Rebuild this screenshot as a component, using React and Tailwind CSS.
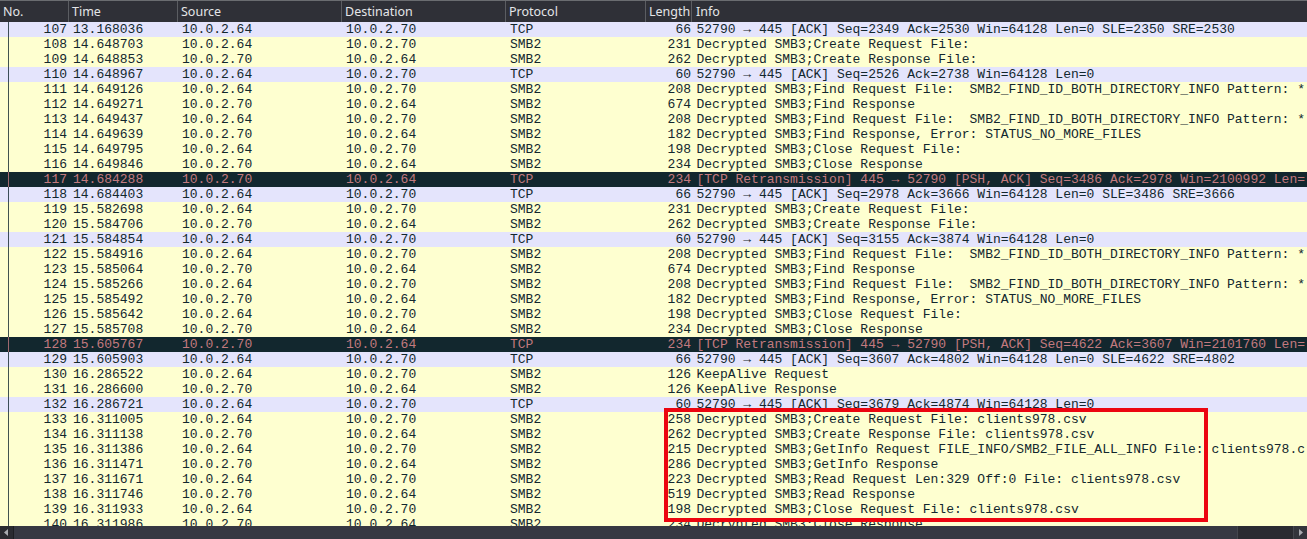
const packets = [
  [107, '13.168036', '10.0.2.64', '10.0.2.70', 'TCP', 66, '52790 → 445 [ACK] Seq=2349 Ack=2530 Win=64128 Len=0 SLE=2350 SRE=2530'],
  [108, '14.648703', '10.0.2.64', '10.0.2.70', 'SMB2', 231, 'Decrypted SMB3;Create Request File:'],
  [109, '14.648853', '10.0.2.70', '10.0.2.64', 'SMB2', 262, 'Decrypted SMB3;Create Response File:'],
  [110, '14.648967', '10.0.2.64', '10.0.2.70', 'TCP', 60, '52790 → 445 [ACK] Seq=2526 Ack=2738 Win=64128 Len=0'],
  [111, '14.649126', '10.0.2.64', '10.0.2.70', 'SMB2', 208, 'Decrypted SMB3;Find Request File:  SMB2_FIND_ID_BOTH_DIRECTORY_INFO Pattern: *'],
  [112, '14.649271', '10.0.2.70', '10.0.2.64', 'SMB2', 674, 'Decrypted SMB3;Find Response'],
  [113, '14.649437', '10.0.2.64', '10.0.2.70', 'SMB2', 208, 'Decrypted SMB3;Find Request File:  SMB2_FIND_ID_BOTH_DIRECTORY_INFO Pattern: *'],
  [114, '14.649639', '10.0.2.70', '10.0.2.64', 'SMB2', 182, 'Decrypted SMB3;Find Response, Error: STATUS_NO_MORE_FILES'],
  [115, '14.649795', '10.0.2.64', '10.0.2.70', 'SMB2', 198, 'Decrypted SMB3;Close Request File:'],
  [116, '14.649846', '10.0.2.70', '10.0.2.64', 'SMB2', 234, 'Decrypted SMB3;Close Response'],
  [117, '14.684288', '10.0.2.70', '10.0.2.64', 'TCP', 234, '[TCP Retransmission] 445 → 52790 [PSH, ACK] Seq=3486 Ack=2978 Win=2100992 Len='],
  [118, '14.684403', '10.0.2.64', '10.0.2.70', 'TCP', 66, '52790 → 445 [ACK] Seq=2978 Ack=3666 Win=64128 Len=0 SLE=3486 SRE=3666'],
  [119, '15.582698', '10.0.2.64', '10.0.2.70', 'SMB2', 231, 'Decrypted SMB3;Create Request File:'],
  [120, '15.584706', '10.0.2.70', '10.0.2.64', 'SMB2', 262, 'Decrypted SMB3;Create Response File:'],
  [121, '15.584854', '10.0.2.64', '10.0.2.70', 'TCP', 60, '52790 → 445 [ACK] Seq=3155 Ack=3874 Win=64128 Len=0'],
  [122, '15.584916', '10.0.2.64', '10.0.2.70', 'SMB2', 208, 'Decrypted SMB3;Find Request File:  SMB2_FIND_ID_BOTH_DIRECTORY_INFO Pattern: *'],
  [123, '15.585064', '10.0.2.70', '10.0.2.64', 'SMB2', 674, 'Decrypted SMB3;Find Response'],
  [124, '15.585266', '10.0.2.64', '10.0.2.70', 'SMB2', 208, 'Decrypted SMB3;Find Request File:  SMB2_FIND_ID_BOTH_DIRECTORY_INFO Pattern: *'],
  [125, '15.585492', '10.0.2.70', '10.0.2.64', 'SMB2', 182, 'Decrypted SMB3;Find Response, Error: STATUS_NO_MORE_FILES'],
  [126, '15.585642', '10.0.2.64', '10.0.2.70', 'SMB2', 198, 'Decrypted SMB3;Close Request File:'],
  [127, '15.585708', '10.0.2.70', '10.0.2.64', 'SMB2', 234, 'Decrypted SMB3;Close Response'],
  [128, '15.605767', '10.0.2.70', '10.0.2.64', 'TCP', 234, '[TCP Retransmission] 445 → 52790 [PSH, ACK] Seq=4622 Ack=3607 Win=2101760 Len='],
  [129, '15.605903', '10.0.2.64', '10.0.2.70', 'TCP', 66, '52790 → 445 [ACK] Seq=3607 Ack=4802 Win=64128 Len=0 SLE=4622 SRE=4802'],
  [130, '16.286522', '10.0.2.64', '10.0.2.70', 'SMB2', 126, 'KeepAlive Request'],
  [131, '16.286600', '10.0.2.70', '10.0.2.64', 'SMB2', 126, 'KeepAlive Response'],
  [132, '16.286721', '10.0.2.64', '10.0.2.70', 'TCP', 60, '52790 → 445 [ACK] Seq=3679 Ack=4874 Win=64128 Len=0'],
  [133, '16.311005', '10.0.2.64', '10.0.2.70', 'SMB2', 258, 'Decrypted SMB3;Create Request File: clients978.csv'],
  [134, '16.311138', '10.0.2.70', '10.0.2.64', 'SMB2', 262, 'Decrypted SMB3;Create Response File: clients978.csv'],
  [135, '16.311386', '10.0.2.64', '10.0.2.70', 'SMB2', 215, 'Decrypted SMB3;GetInfo Request FILE_INFO/SMB2_FILE_ALL_INFO File: clients978.c'],
  [136, '16.311471', '10.0.2.70', '10.0.2.64', 'SMB2', 286, 'Decrypted SMB3;GetInfo Response'],
  [137, '16.311671', '10.0.2.64', '10.0.2.70', 'SMB2', 223, 'Decrypted SMB3;Read Request Len:329 Off:0 File: clients978.csv'],
  [138, '16.311746', '10.0.2.70', '10.0.2.64', 'SMB2', 519, 'Decrypted SMB3;Read Response'],
  [139, '16.311933', '10.0.2.64', '10.0.2.70', 'SMB2', 198, 'Decrypted SMB3;Close Request File: clients978.csv'],
  [140, '16.311986', '10.0.2.70', '10.0.2.64', 'SMB2', 234, 'Decrypted SMB3;Close Response'],
];

const HeaderCell = ({ className, children }) => (
  <div className={`shrink-0 h-full flex items-center pl-[3px] pt-[1px] border-r border-[#5b5d62] ${className}`}>{children}</div>
);

const rowColor = (p) => {
  if (p[6].startsWith('[TCP Retransmission]')) return 'bg-[#12272e] text-[#c27a7f]';
  if (p[4] === 'TCP') return 'bg-[#e4e4fc] text-[#12272e]';
  return 'bg-[#feffd0] text-[#12272e]';
};

const Row = ({ p }) => (
  <div className={`relative flex h-[15px] shrink-0 leading-[15px] whitespace-pre ${rowColor(p)}`}>
    <div className="absolute left-[8px] top-0 h-full w-px bg-current opacity-80" />
    <div className="w-[67px] shrink-0 text-right">{p[0]}</div>
    <div className="w-[109px] shrink-0 pl-[6px]">{p[1]}</div>
    <div className="w-[164px] shrink-0 pl-[6px]">{p[2]}</div>
    <div className="w-[164px] shrink-0 pl-[6px]">{p[3]}</div>
    <div className="w-[140px] shrink-0 pl-[6px]">{p[4]}</div>
    <div className="w-[47px] shrink-0 text-right">{p[5]}</div>
    <div className="pl-[5.5px]">{p[6]}</div>
  </div>
);

const App = () => {
  return (
    <div className="relative flex h-[539px] w-[1307px] flex-col overflow-hidden bg-[#feffd0]">
      <div className="flex h-[22px] shrink-0 border-t border-[#6a6c70] bg-[#2f3037] text-[12.5px] text-[#e4e5e7] font-['Noto_Sans',sans-serif]">
        <HeaderCell className="w-[69px]">No.</HeaderCell>
        <HeaderCell className="w-[109px]">Time</HeaderCell>
        <HeaderCell className="w-[164px]">Source</HeaderCell>
        <HeaderCell className="w-[164px]">Destination</HeaderCell>
        <HeaderCell className="w-[140px]">Protocol</HeaderCell>
        <HeaderCell className="w-[46px]">Length</HeaderCell>
        <div className="flex h-full flex-1 items-center pl-[4px] pt-[1px]">Info</div>
      </div>
      <div className="flex min-h-0 flex-1 flex-col overflow-hidden font-['Liberation_Mono',monospace] text-[13px]">
        {packets.map((p) => (
          <Row key={p[0]} p={p} />
        ))}
      </div>
      <div className="flex h-[13px] shrink-0 bg-[#2a2b31]">
        <div className="flex h-full w-[14px] items-center justify-center border-r border-[#1d1e22]">
          <svg width="5" height="7" viewBox="0 0 5 7"><path d="M4 0v7L0 3.500z" fill="#a9abb0" /></svg>
        </div>
        <div className="h-full w-[1224px] border-r border-[#44464d] bg-[#363842]" />
        <div className="flex-1" />
        <div className="flex h-full w-[14px] items-center justify-center border-l border-[#44464d] bg-[#33353c]">
          <svg width="5" height="7" viewBox="0 0 5 7"><path d="M1 0v7l4-3.500z" fill="#a9abb0" /></svg>
        </div>
      </div>
      <div className="absolute left-[664px] top-[408px] h-[114px] w-[544px] border-4 border-[#ec0510]" />
    </div>
  );
};

export default App;
